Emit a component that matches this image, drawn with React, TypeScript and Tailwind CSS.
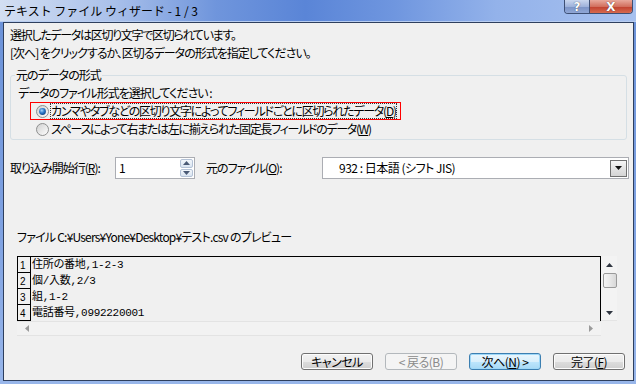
import React from 'react';

const mono = "font-['Liberation_Mono','Noto_Sans_CJK_JP',monospace]";

function Radio({ checked, id }: { checked?: boolean; id: string }) {
  return (
    <svg width="13" height="13" viewBox="0 0 13 13" className="shrink-0">
      <defs>
        <linearGradient id={`ring-${id}`} x1="0" y1="0" x2="1" y2="1">
          <stop offset="0" stopColor="#cfcfcf" />
          <stop offset="1" stopColor="#ffffff" />
        </linearGradient>
        <radialGradient id={`dot-${id}`} cx="0.4" cy="0.35" r="0.75">
          <stop offset="0" stopColor="#a8d8ff" />
          <stop offset="0.5" stopColor="#2d78c8" />
          <stop offset="1" stopColor="#0c3f7e" />
        </radialGradient>
      </defs>
      <circle cx="6.5" cy="6.5" r="6" fill={`url(#ring-${id})`} stroke="#8e8f8f" />
      {checked && <circle cx="6.5" cy="6.5" r="3.4" fill={`url(#dot-${id})`} />}
    </svg>
  );
}

function Tri({ dir, color = '#3a3a3a' }: { dir: 'up' | 'down' | 'left' | 'right'; color?: string }) {
  const pts = {
    up: '0,4 3.5,0 7,4',
    down: '0,0 7,0 3.5,4',
    left: '4,0 4,7 0,3.5',
    right: '0,0 4,3.5 0,7',
  }[dir];
  const w = dir === 'up' || dir === 'down' ? 7 : 4;
  const h = dir === 'up' || dir === 'down' ? 4 : 7;
  return (
    <svg width={w} height={h} viewBox={`0 0 ${w} ${h}`}>
      <polygon points={pts} fill={color} />
    </svg>
  );
}

function TitleBar() {
  return (
    <div className="h-[22px] shrink-0 flex items-start justify-between pl-[4px] pr-[3px] bg-[linear-gradient(90deg,#d3dff2_0%,#a9c0ea_18%,#6f95dc_34%,#5a85d7_48%,#6f96df_62%,#93b2ea_78%,#a7c1ef_100%)] border-b border-[#b8cdf0]">
      <div className="h-[21px] flex items-center text-[12px] leading-[16px] text-black whitespace-nowrap">
        テキスト ファイル ウィザード - 1 / 3
      </div>
      <div className="flex h-[14px] border border-t-0 border-[#3d4f74] rounded-b-[4px] overflow-hidden">
        <div className="w-[25px] h-full flex items-center justify-center bg-[linear-gradient(180deg,#c9d6ee_0%,#9fb3db_50%,#7b93c6_51%,#90a7d6_100%)] border-r border-[#3d4f74]">
          <span className="text-white font-bold text-[12px] leading-[12px] font-['DejaVu_Sans',sans-serif] [text-shadow:0_0_1px_#223]">?</span>
        </div>
        <div className="w-[42px] h-full flex items-center justify-center bg-[linear-gradient(180deg,#e8a99c_0%,#d2705f_50%,#c0402f_51%,#d66a4f_100%)]">
          <span className="text-white font-bold text-[12px] leading-[12px] font-['DejaVu_Sans',sans-serif] [text-shadow:0_0_1px_#311]">X</span>
        </div>
      </div>
    </div>
  );
}

function Button({ children, variant }: { children: React.ReactNode; variant?: 'default' | 'disabled' }) {
  const base = 'w-[72px] h-[17px] rounded-[3px] border flex items-center justify-center text-[12px] leading-[15px]';
  if (variant === 'disabled')
    return <div className={`${base} border-[#b3b8bc] bg-[#f4f4f4] text-[#8a8a8a]`}>{children}</div>;
  if (variant === 'default')
    return (
      <div className={`${base} border-[#3c7fb1] bg-[linear-gradient(180deg,#eaf6fd_0%,#d9f0fc_50%,#bee6fd_51%,#a7d9f5_100%)] shadow-[inset_0_0_0_1px_#9fd8f8]`}>
        {children}
      </div>
    );
  return (
    <div className={`${base} border-[#707070] bg-[linear-gradient(180deg,#f2f2f2_0%,#ebebeb_50%,#dddddd_51%,#cfcfcf_100%)] shadow-[inset_0_0_0_1px_#fcfcfc]`}>
      {children}
    </div>
  );
}

const rows = ['住所の番地,1-2-3', '個/入数,2/3', '組,1-2', '電話番号,0992220001'];

export default function App() {
  return (
    <div className="w-[636px] h-[384px] flex flex-col overflow-hidden bg-[linear-gradient(180deg,#6a91d8_0%,#7fa2e2_60%,#98b6ea_100%)] font-['Noto_Sans_CJK_JP',sans-serif] text-black">
      <TitleBar />
      <div className="flex-1 ml-[3px] mr-[2px] mb-[3px] border border-[#2e3f5e] bg-[#f0f0f0] flex flex-col text-[12px] leading-[18px] tracking-[-1px] [font-feature-settings:'palt']">
        <div className="pt-[3px] pl-[6px] whitespace-nowrap">
          <div className="tracking-[-1.3px]">選択したデータは区切り文字で区切られています。</div>
          <div>[次へ] をクリックするか、区切るデータの形式を指定してください。</div>
        </div>

        <fieldset className="mt-[4px] ml-[6px] mr-[6px] pb-[1px] border border-[#d5dfe5] rounded-[3px]">
          <legend className="ml-[4px] px-[1px]">元のデータの形式</legend>
          <div className="pl-[7px] whitespace-nowrap">データのファイル形式を選択してください :</div>
          <div className="ml-[19px] w-[371px] h-[18px] border border-[#ff0000] flex items-center pl-[5px] gap-[1px] whitespace-nowrap tracking-[-1.25px]">
            <Radio checked id="a" />
            <span className="border border-dotted border-[#333] leading-[14px]">
              カンマやタブなどの区切り文字によってフィールドごとに区切られたデータ(<span className="underline">D</span>)
            </span>
          </div>
          <div className="ml-[19px] h-[18px] border border-transparent flex items-center pl-[5px] gap-[1px] whitespace-nowrap tracking-[-1.3px]">
            <Radio id="b" />
            <span className="border border-transparent leading-[14px]">
              スペースによって右または左に揃えられた固定長フィールドのデータ(<span className="underline">W</span>)
            </span>
          </div>
        </fieldset>

        <div className="mt-[17px] pl-[6px] h-[22px] flex items-center whitespace-nowrap">
          <div className="w-[105px]">
            取り込み開始行(<span className="underline">R</span>):
          </div>
          <div className="w-[80px] h-[22px] border border-[#abadb3] bg-white flex">
            <div className="flex-1 pl-[3px] leading-[20px]">1</div>
            <div className="w-[14px] flex flex-col gap-[1px] py-[1px] pr-[1px]">
              <div className="flex-1 flex items-center justify-center rounded-[2px] border border-[#b4c2d6] bg-[linear-gradient(180deg,#f3f7fb_0%,#d9e4f1_100%)]">
                <Tri dir="up" color="#4a5a75" />
              </div>
              <div className="flex-1 flex items-center justify-center rounded-[2px] border border-[#b4c2d6] bg-[linear-gradient(180deg,#f3f7fb_0%,#d9e4f1_100%)]">
                <Tri dir="down" color="#4a5a75" />
              </div>
            </div>
          </div>
          <div className="ml-[11px] w-[116px]">
            元のファイル(<span className="underline">O</span>):
          </div>
          <div className="w-[307px] h-[22px] border border-[#abadb3] bg-white flex items-center">
            <div className="flex-1 pl-[16px] tracking-[-0.5px]">932 : 日本語 (シフト JIS)</div>
            <div className="w-[17px] h-[17px] mr-[1px] border border-[#707070] bg-[linear-gradient(180deg,#f6f6f6_0%,#e4e4e4_50%,#d4d4d4_100%)] flex items-center justify-center">
              <Tri dir="down" color="#111" />
            </div>
          </div>
        </div>

        <div className="mt-[49px] pl-[13px] whitespace-nowrap tracking-[-0.8px]">
          ファイル C:¥Users¥Yone¥Desktop¥テスト.csv のプレビュー
        </div>

        <div className="mt-[10px] ml-[13px] w-[600px] h-[80px] flex flex-col">
          <div className="h-[65px] flex">
            <div className="w-[584px] border-t border-r border-black overflow-hidden">
              {rows.map((r, i) => (
                <div key={i} className="h-[16px] flex">
                  <div className="w-[14px] shrink-0 border-l border-r border-b border-black flex items-end pl-[2px] text-[10px] leading-[12px] tracking-normal font-['Liberation_Sans',sans-serif] [font-feature-settings:normal]">
                    {i + 1}
                  </div>
                  <div className={`pl-[1px] text-[11px] leading-[16px] tracking-[-0.3px] whitespace-nowrap [font-feature-settings:normal] ${mono}`}>
                    {r}
                  </div>
                </div>
              ))}
            </div>
            <div className="w-[16px] pl-[1px] flex flex-col items-center bg-[#f3f3f3] border-b border-[#e4e4e4]">
              <div className="h-[17px] flex items-center justify-center">
                <Tri dir="up" color="#2f3540" />
              </div>
              <div className="w-[14px] h-[15px] rounded-[2px] border border-[#9a9a9a] bg-[linear-gradient(90deg,#f4f4f4_0%,#e8e8e8_50%,#d8d8d8_100%)]" />
              <div className="flex-1" />
              <div className="h-[14px] flex items-center justify-center">
                <Tri dir="down" color="#2f3540" />
              </div>
            </div>
          </div>
          <div className="h-[15px] flex">
            <div className="w-[584px] flex items-center justify-between px-[8px] border-t border-b border-[#e3e3e3] bg-[#f2f2f2]">
              <Tri dir="left" color="#9a9a9a" />
              <Tri dir="right" color="#9a9a9a" />
            </div>
          </div>
        </div>

        <div className="mt-[17px] pr-[8px] flex justify-end gap-[12px] whitespace-nowrap tracking-[-0.5px]">
          <Button>キャンセル</Button>
          <Button variant="disabled">&lt; 戻る(B)</Button>
          <Button variant="default">
            次へ(<span className="underline">N</span>) &gt;
          </Button>
          <Button>
            完了(<span className="underline">F</span>)
          </Button>
        </div>
      </div>
    </div>
  );
}
